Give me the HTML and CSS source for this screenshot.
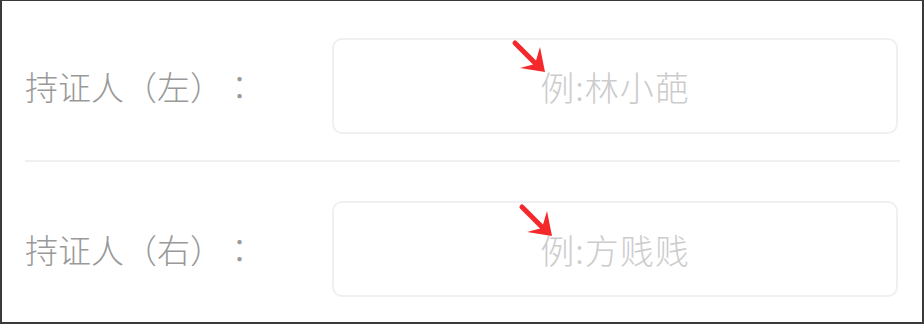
FILE: index.html
```html
<!DOCTYPE html>
<html lang="zh-CN">
<head>
<meta charset="utf-8">
<title>持证人</title>
<link rel="stylesheet" href="styles.css">
</head>
<body>
<div class="frame">
  <div class="form">
    <div class="row">
      <label class="label" lang="zh-TW">持证人（左）：</label>
      <input class="field" type="text" placeholder="例:林小葩">
    </div>
    <div class="row row-last">
      <label class="label" lang="zh-TW">持证人（右）：</label>
      <input class="field" type="text" placeholder="例:方贱贱">
    </div>
  </div>
  <svg class="arrow arrow-1" width="45" height="42" viewBox="0 0 45 42">
    <line x1="9" y1="7" x2="30" y2="28" stroke="#f5292b" stroke-width="5" stroke-linecap="round"/>
    <polygon points="39,36 14,32 29,28 34,11" fill="#f5292b"/>
  </svg>
  <svg class="arrow arrow-2" width="45" height="42" viewBox="0 0 45 42">
    <line x1="9" y1="7" x2="30" y2="28" stroke="#f5292b" stroke-width="5" stroke-linecap="round"/>
    <polygon points="39,36 14,32 29,28 34,11" fill="#f5292b"/>
  </svg>
</div>
</body>
</html>
```
FILE: styles.css
```css
html, body {
  margin: 0;
  padding: 0;
  background: #ffffff;
}

.frame {
  position: relative;
  box-sizing: border-box;
  width: 924px;
  height: 324px;
  border: 2px solid #3a3a3a;
  border-top-width: 1px;
  background: #ffffff;
  font-family: "Noto Sans CJK SC", "Noto Sans", sans-serif;
  overflow: hidden;
}

.form {
  padding: 0 22px 0 23px;
}

.row {
  display: flex;
  align-items: center;
  padding: 37px 0 26px;
  border-bottom: 2px solid #f0f0f0;
}

.row-last {
  padding-top: 39px;
  border-bottom: none;
}

.label {
  flex: 0 0 307px;
  font-family: "Noto Sans CJK TC", "Noto Sans CJK SC", sans-serif;
  font-size: 33px;
  font-weight: 300;
  color: #999999;
  line-height: 1;
  white-space: nowrap;
  text-spacing-trim: space-all;
}

.field {
  flex: 0 0 566px;
  box-sizing: border-box;
  width: 566px;
  height: 96px;
  margin: 0;
  padding: 0 12px;
  border: 2px solid #f0f0f0;
  border-radius: 10px;
  background: #ffffff;
  font-family: "Noto Sans CJK SC", "Noto Sans", sans-serif;
  font-size: 34px;
  font-weight: 300;
  letter-spacing: 1px;
  color: #333333;
  text-align: center;
  outline: none;
}

.field::placeholder {
  color: #cccccc;
}

.arrow {
  position: absolute;
}

.arrow-1 {
  left: 504px;
  top: 35px;
}

.arrow-2 {
  left: 511px;
  top: 199px;
}
```
